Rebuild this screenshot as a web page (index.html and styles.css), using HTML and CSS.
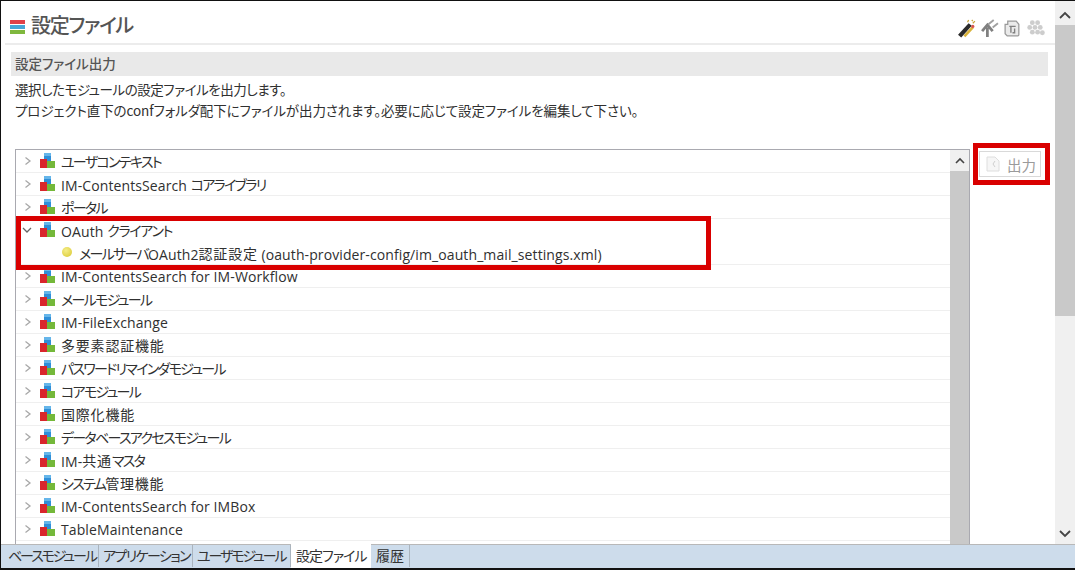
FILE: index.html
```html
<!DOCTYPE html>
<html lang="ja">
<head>
<meta charset="utf-8">
<title>設定ファイル</title>
<link rel="stylesheet" href="styles.css">
</head>
<body>
<svg width="0" height="0" class="defs">
  <symbol id="mod" viewBox="0 0 16 16">
    <rect x="4" y="0" width="7" height="8" fill="#2f8fd8"/>
    <rect x="4" y="0" width="7" height="3" fill="#66b6ea"/>
    <rect x="0" y="6" width="7" height="9" fill="#d9262c"/>
    <rect x="7" y="8" width="8" height="7" fill="#74b83a"/>
  </symbol>
  <symbol id="chev" viewBox="0 0 8 10">
    <path d="M1.5 1.5 6 5 1.5 8.500" fill="none" stroke="#a8a8a8" stroke-width="1.3"/>
  </symbol>
</svg>
<div class="app">
  <div class="main">
    <div class="content">
      <header class="head">
        <svg class="stack" width="15" height="14" viewBox="0 0 15 14">
          <rect y="0" width="15" height="4" fill="#e0414a"/>
          <rect y="5" width="15" height="4" fill="#46a6d8"/>
          <rect y="10" width="15" height="4" fill="#7fb83e"/>
        </svg>
        <h1 class="title">設定ファイル</h1>
        <div class="tools">
          <svg width="19" height="19" viewBox="0 0 18 18">
            <path d="M1 15 11 4l3 2.500L4 17.500Z" fill="#2b2b2b"/>
            <path d="M7 16.500 15 8" stroke="#d9b23a" stroke-width="2.500"/>
            <path d="M10 3l1-2M15 4l2-2M14 1l1 1" stroke="#c9a53a" stroke-width="1.200"/>
            <circle cx="15" cy="7" r="1.500" fill="#d9534f"/>
          </svg>
          <svg width="19" height="19" viewBox="0 0 18 18">
            <path d="M7 17V8M2 11.500 7 5.500l5 6" fill="none" stroke="#808080" stroke-width="2.600"/>
            <path d="M8 5l5-4M12 8l5-4" stroke="#a0a0a0" stroke-width="1.800"/>
          </svg>
          <svg width="19" height="19" viewBox="0 0 18 18">
            <path d="M2 5h2.500V2h8l2.500 3v10a1 1 0 0 1-1 1H4L2 14Z" fill="#eaeaea" stroke="#9a9a9a" stroke-width="1.200"/>
            <path d="M6 7h6M7.500 7v6M11 9v4H9" fill="none" stroke="#808080" stroke-width="1.300"/>
          </svg>
          <svg width="19" height="19" viewBox="0 0 18 18">
            <g fill="#cdcdcd"><circle cx="6" cy="3.500" r="2.300"/><circle cx="11" cy="3.500" r="2.300"/><circle cx="3.500" cy="8" r="2.300"/><circle cx="8.500" cy="8" r="2.300"/><circle cx="13.500" cy="8" r="2.300"/><circle cx="6" cy="12.500" r="2.300"/><circle cx="11" cy="12.500" r="2.300"/><circle cx="15.500" cy="13" r="2.300"/></g>
          </svg>
        </div>
      </header>
      <div class="section-bar">設定ファイル出力</div>
      <p class="desc"><span class="desc-a">選択したモジュールの設定ファイルを出力します。</span><br><span class="desc-b">プロジェクト直下のconfフォルダ配下にファイルが出力されます。必要に応じて設定ファイルを編集して下さい。</span></p>
      <div class="work">
        <div class="tree">
          <ul class="rows">
            <li class="row"><svg class="chev"><use href="#chev"/></svg><svg class="mod"><use href="#mod"/></svg><span class="jp">ユーザコンテキスト</span></li>
            <li class="row"><svg class="chev"><use href="#chev"/></svg><svg class="mod"><use href="#mod"/></svg><span class="mix">IM-ContentsSearch <span class="jp">コアライブラリ</span></span></li>
            <li class="row"><svg class="chev"><use href="#chev"/></svg><svg class="mod"><use href="#mod"/></svg><span class="jp">ポータル</span></li>
            <li class="row row-plain"><svg class="chev" viewBox="0 0 10 8"><path d="M1 2 5 6 9 2" fill="none" stroke="#666" stroke-width="1.300"/></svg><svg class="mod"><use href="#mod"/></svg><span class="mix">OAuth <span class="jp jp-mid">クライアント</span></span></li>
            <li class="row row-child"><span class="dot"></span><span class="mix"><span class="jp">メールサーバ</span>OAuth2<span class="kj">認証設定</span> (oauth-provider-config/im_oauth_mail_settings.xml)</span></li>
            <li class="row"><svg class="chev"><use href="#chev"/></svg><svg class="mod"><use href="#mod"/></svg><span class="mix">IM-ContentsSearch for IM-Workflow</span></li>
            <li class="row"><svg class="chev"><use href="#chev"/></svg><svg class="mod"><use href="#mod"/></svg><span class="jp">メールモジュール</span></li>
            <li class="row"><svg class="chev"><use href="#chev"/></svg><svg class="mod"><use href="#mod"/></svg><span class="mix">IM-FileExchange</span></li>
            <li class="row"><svg class="chev"><use href="#chev"/></svg><svg class="mod"><use href="#mod"/></svg><span class="kj">多要素認証機能</span></li>
            <li class="row"><svg class="chev"><use href="#chev"/></svg><svg class="mod"><use href="#mod"/></svg><span class="jp">パスワードリマインダモジュール</span></li>
            <li class="row"><svg class="chev"><use href="#chev"/></svg><svg class="mod"><use href="#mod"/></svg><span class="jp">コアモジュール</span></li>
            <li class="row"><svg class="chev"><use href="#chev"/></svg><svg class="mod"><use href="#mod"/></svg><span class="kj">国際化機能</span></li>
            <li class="row"><svg class="chev"><use href="#chev"/></svg><svg class="mod"><use href="#mod"/></svg><span class="jp">データベースアクセスモジュール</span></li>
            <li class="row"><svg class="chev"><use href="#chev"/></svg><svg class="mod"><use href="#mod"/></svg><span class="mix">IM-<span class="kj">共通</span><span class="jp">マスタ</span></span></li>
            <li class="row"><svg class="chev"><use href="#chev"/></svg><svg class="mod"><use href="#mod"/></svg><span class="mix"><span class="jp">システム</span><span class="kj">管理機能</span></span></li>
            <li class="row"><svg class="chev"><use href="#chev"/></svg><svg class="mod"><use href="#mod"/></svg><span class="mix">IM-ContentsSearch for IMBox</span></li>
            <li class="row"><svg class="chev"><use href="#chev"/></svg><svg class="mod"><use href="#mod"/></svg><span class="mix">TableMaintenance</span></li>
          </ul>
          <div class="tree-scroll">
            <div class="sb-btn"><svg width="10" height="7" viewBox="0 0 10 7"><path d="M1 6 5 2l4 4" fill="none" stroke="#444" stroke-width="1.600"/></svg></div>
            <div class="sb-thumb"></div>
          </div>
        </div>
        <div class="side">
          <button class="export">
            <svg width="14" height="16" viewBox="0 0 14 16"><path d="M1 1h8l4 4v10H1Z" fill="#f6f6f6" stroke="#dedede"/><path d="M9 5l-2 3 2 3" fill="none" stroke="#cfcfcf"/></svg>
            <span class="btn-label">出力</span>
          </button>
        </div>
      </div>
    </div>
    <div class="page-scroll">
      <div class="sb-btn page-btn"><svg width="12" height="8" viewBox="0 0 12 8"><path d="M1 7 6 2l5 5" fill="none" stroke="#444" stroke-width="1.800"/></svg></div>
      <div class="page-thumb"></div>
      <div class="page-track"></div>
      <div class="sb-btn page-btn"><svg width="12" height="8" viewBox="0 0 12 8"><path d="M1 1l5 5 5-5" fill="none" stroke="#444" stroke-width="1.800"/></svg></div>
    </div>
  </div>
  <nav class="tabs">
    <span class="tab tab-base">ベースモジュール</span>
    <span class="tab tab-app">アプリケーション</span>
    <span class="tab tab-user">ユーザモジュール</span>
    <span class="tab tab-active">設定ファイル</span>
    <span class="tab tab-kanji">履歴</span>
  </nav>
  <div class="mark mark-tree"></div>
  <div class="mark mark-btn"></div>
</div>
</body>
</html>
```
FILE: styles.css
```css
* { box-sizing: border-box; }
html, body { margin: 0; padding: 0; }
body {
  width: 1075px;
  height: 570px;
  overflow: hidden;
  background: #fff;
  font-family: "Open Sans", "Noto Sans CJK JP", sans-serif;
  font-size: 14px;
  color: #303030;
}
.defs { position: absolute; }
.jp, .kj { font-family: "Noto Sans CJK JP", sans-serif; font-feature-settings: "palt"; }
.jp { letter-spacing: -1.7px; }
.jp-mid { letter-spacing: -1.3px; }
.kj { letter-spacing: 0.8px; }
.mix { position: relative; top: 1px; }
.mix .jp, .mix .kj { position: relative; top: -1px; }
.app {
  position: relative;
  width: 1075px;
  height: 570px;
  border-top: 1px solid #111;
  border-left: 1px solid #111;
  border-bottom: 2px solid #111;
  display: flex;
  flex-direction: column;
}
.main { flex: 1; display: flex; min-height: 0; }
.content { width: 1054px; padding: 0 0 0 10px; display: flex; flex-direction: column; min-height: 0; }
.head {
  height: 44px;
  border-bottom: 2px solid #ececec;
  display: flex;
  align-items: center;
  gap: 6px;
  padding-top: 5px;
  margin-left: -6px;
  padding-left: 5px;
}
.stack { margin-top: 5px; }
.title {
  margin: 0;
  font: 500 20px "Noto Sans CJK JP", sans-serif;
  font-feature-settings: "palt";
  letter-spacing: -1.2px;
  color: #555;
}
.tools { margin-left: auto; display: flex; gap: 4px; padding: 8px 10px 0 0; }
.section-bar {
  margin-top: 7px;
  width: 1037px;
  height: 24px;
  padding-left: 4px;
  background: #e9e9e9;
  font: 500 13.5px/23px "Noto Sans CJK JP", sans-serif;
  font-feature-settings: "palt";
  color: #555;
}
.desc {
  margin: 3px 0 0 4px;
  height: 48px;
  font: 13.5px/21px "Noto Sans CJK JP", sans-serif;
  font-feature-settings: "palt";
  color: #303030;
}
.desc-a { letter-spacing: -0.45px; }
.desc-b { letter-spacing: -0.1px; }
.work { display: flex; flex: 1; min-height: 0; margin-top: 22px; margin-left: 4px; }
.tree {
  width: 956px;
  border: 1px solid #a9a9b0;
  border-bottom: 0;
  display: flex;
  min-height: 0;
  overflow: hidden;
}
.rows { flex: 1; list-style: none; margin: 0; padding: 0; }
.row {
  height: 23px;
  display: flex;
  align-items: center;
  border-bottom: 1px solid #efefef;
  padding-left: 8px;
  white-space: nowrap;
  line-height: 22px;
  letter-spacing: 0.1px;
}
.row-plain { border-bottom-color: #fff; }
.chev { width: 8px; height: 10px; flex: none; margin-right: 8px; }
.row-plain .chev { width: 10px; height: 8px; margin-left: -2px; }
.mod { width: 16px; height: 16px; flex: none; margin-right: 5px; margin-top: 0; }
.row-child { padding-left: 46px; }
.dot {
  width: 10px;
  height: 10px;
  border-radius: 50%;
  margin-right: 7px;
  margin-top: -2px;
  background: radial-gradient(circle at 40% 35%, #f5ee8a, #d9c72e);
  flex: none;
}
.tree-scroll { width: 19px; flex: none; display: flex; flex-direction: column; }
.sb-btn { background: #f0f0f0; display: flex; align-items: center; justify-content: center; height: 21px; flex: none; }
.sb-thumb { flex: 1; background: #c9c9c9; }
.side { width: 85px; padding: 2px 0 0 9px; }
.export {
  width: 62px;
  height: 26px;
  border: 1px solid #d9d9d9;
  background: #fff;
  display: flex;
  align-items: center;
  justify-content: center;
  gap: 7px;
  padding: 0 0 0 2px;
  font-size: 14.5px;
  color: #9a9a9a;
}
.btn-label { font-family: "Noto Sans CJK JP", sans-serif; }
.page-scroll { width: 20px; flex: none; display: flex; flex-direction: column; background: #f0f0f0; padding-top: 3px; }
.page-btn { height: 21px; }
.page-thumb { height: 291px; background: #c9c9c9; }
.page-track { flex: 1; }
.tabs {
  height: 24px;
  background: #cddceb;
  border-top: 1px solid #b8b8b8;
  display: flex;
  padding: 0 0 0 3px;
  flex: none;
}
.tab {
  padding: 0 0 0 4px;
  height: 22px;
  border-right: 1px solid #aab4be;
  font: 14px/21px "Noto Sans CJK JP", sans-serif;
  font-feature-settings: "palt";
  letter-spacing: -2.1px;
  white-space: nowrap;
  overflow: hidden;
  color: #333;
}
.tab-base { width: 95px; }
.tab-app { width: 94px; letter-spacing: -1.6px; }
.tab-user { width: 98px; }
.tab-active { width: 80px; background: #fff; height: 24px; margin-top: -1px; line-height: 23px; letter-spacing: -1px; padding-left: 5px; border-right: 0; }
.tab-kanji { width: 39px; letter-spacing: 0; padding-left: 5px; }
.mark { position: absolute; border: 5px solid #d90000; pointer-events: none; }
.mark-tree { left: 15px; top: 215px; width: 695px; height: 54px; }
.mark-btn { left: 972px; top: 142px; width: 77px; height: 42px; }
```
